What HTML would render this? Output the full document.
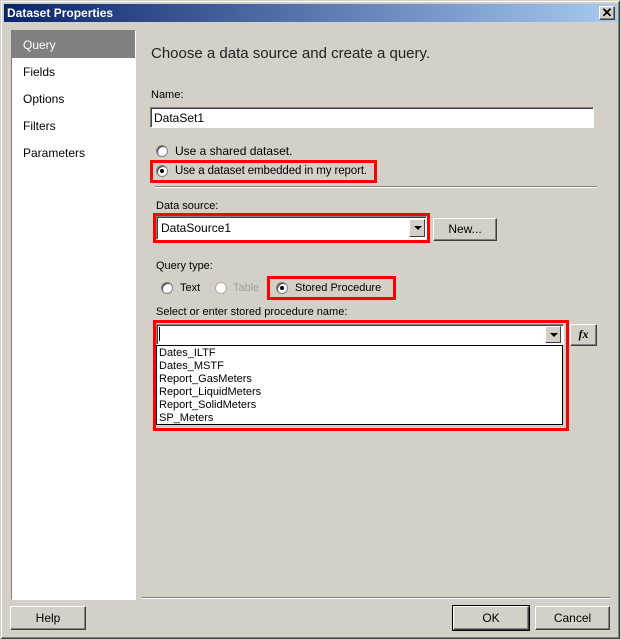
<!DOCTYPE html>
<html><head><style>
*{margin:0;padding:0;box-sizing:border-box}
body{width:621px;height:640px;background:#d4d0c8;font-family:"Liberation Sans",Tahoma,sans-serif;font-size:11px;color:#000;position:relative;overflow:hidden}
.a{position:absolute}
.win{left:0;top:0;width:621px;height:640px;border:1px solid #d4d0c8;box-shadow:inset -1px -1px 0 #404040,inset 1px 1px 0 #fff,inset -2px -2px 0 #808080}
.title{left:4px;top:4px;width:613px;height:18px;background:linear-gradient(90deg,#0a246a,#a6caf0);color:#fff;font-weight:bold;font-size:12px;line-height:18px;padding-left:3px}
.btn{background:#d4d0c8;border:1px solid;border-color:#fff #404040 #404040 #fff;box-shadow:inset -1px -1px 0 #808080;text-align:center}
.inset{background:#fff;border:1px solid;border-color:#808080 #fff #fff #808080;box-shadow:inset 1px 1px 0 #404040}
.red{border:3px solid #f00}
.radio{width:12px;height:12px;border-radius:50%;background:#fff;border:1px solid #808080;box-shadow:inset 1px 1px 0 #404040}
.dot{position:absolute;left:3px;top:3px;width:4px;height:4px;border-radius:50%;background:#000}
.arrow{width:16px;background:#d4d0c8;border:1px solid;border-color:#fff #404040 #404040 #fff}
.arrow:after{content:"";position:absolute;left:4px;top:6px;border:4px solid transparent;border-top:4px solid #000;border-bottom:0}
.nav{left:23px;font-size:12px}
</style></head><body>
<div class="a win"></div>
<div class="a title">Dataset Properties</div>
<div class="a btn" style="left:599px;top:6px;width:16px;height:14px;font-size:13px;line-height:11px;font-weight:bold">✕</div>

<div class="a" style="left:11px;top:30px;width:125px;height:570px;background:#fff;border:1px solid;border-color:#808080 #fff #fff #808080"></div>
<div class="a" style="left:12px;top:31px;width:123px;height:27px;background:#808080"></div>
<div class="a nav" style="top:38px;color:#fff">Query</div>
<div class="a nav" style="top:65px">Fields</div>
<div class="a nav" style="top:92px">Options</div>
<div class="a nav" style="top:119px">Filters</div>
<div class="a nav" style="top:146px">Parameters</div>

<div class="a" style="left:151px;top:45px;font-size:15px;color:#222">Choose a data source and create a query.</div>
<div class="a" style="left:151px;top:89px">Name:</div>
<div class="a inset" style="left:150px;top:107px;width:444px;height:21px;padding:3px 0 0 3px;font-size:12px">DataSet1</div>

<div class="a radio" style="left:156px;top:145px"></div>
<div class="a" style="left:175px;top:144px;font-size:12px">Use a shared dataset.</div>
<div class="a red" style="left:150px;top:160px;width:227px;height:23px"></div>
<div class="a radio" style="left:156px;top:165px"><div class="dot"></div></div>
<div class="a" style="left:175px;top:165px;font-size:11.5px;letter-spacing:-0.1px">Use a dataset embedded in my report.</div>
<div class="a" style="left:155px;top:186px;width:442px;height:2px;border-top:1px solid #808080;border-bottom:1px solid #fff"></div>

<div class="a" style="left:156px;top:200px">Data source:</div>
<div class="a red" style="left:153px;top:213px;width:277px;height:30px"></div>
<div class="a inset" style="left:156px;top:216px;width:271px;height:24px;padding:4px 0 0 4px;font-size:12px">DataSource1</div>
<div class="a arrow" style="left:409px;top:219px;height:18px"></div>
<div class="a btn" style="left:433px;top:218px;width:64px;height:23px;line-height:21px;font-size:12px">New...</div>

<div class="a" style="left:156px;top:260px">Query type:</div>
<div class="a radio" style="left:161px;top:282px"></div>
<div class="a" style="left:180px;top:282px;font-size:11px">Text</div>
<div class="a radio" style="left:215px;top:282px;border-color:#aaa;box-shadow:none"></div>
<div class="a" style="left:233px;top:282px;color:#a0a0a0">Table</div>
<div class="a red" style="left:267px;top:276px;width:129px;height:24px"></div>
<div class="a radio" style="left:276px;top:282px"><div class="dot"></div></div>
<div class="a" style="left:295px;top:282px">Stored Procedure</div>

<div class="a" style="left:156px;top:306px">Select or enter stored procedure name:</div>
<div class="a red" style="left:153px;top:320px;width:416px;height:111px"></div>
<div class="a inset" style="left:156px;top:324px;width:408px;height:21px"></div>
<div class="a" style="left:159px;top:327px;width:1px;height:14px;background:#000"></div>
<div class="a arrow" style="left:545px;top:326px;height:17px"></div>
<div class="a" style="left:156px;top:345px;width:407px;height:80px;background:#fff;border:1px solid #000;padding:1px 0 0 2px;line-height:13px;font-size:11px">Dates_ILTF<br>Dates_MSTF<br>Report_GasMeters<br>Report_LiquidMeters<br>Report_SolidMeters<br>SP_Meters</div>
<div class="a btn" style="left:570px;top:324px;width:27px;height:22px;font-family:'Liberation Serif',serif;font-style:italic;font-weight:bold;font-size:12px;line-height:19px">fx</div>

<div class="a" style="left:142px;top:597px;width:468px;height:2px;border-top:1px solid #808080;border-bottom:1px solid #fff"></div>
<div class="a btn" style="left:10px;top:606px;width:76px;height:24px;line-height:22px;font-size:12px">Help</div>
<div class="a btn" style="left:453px;top:606px;width:76px;height:24px;line-height:22px;font-size:12px;outline:1px solid #000">OK</div>
<div class="a btn" style="left:535px;top:606px;width:75px;height:24px;line-height:22px;font-size:12px">Cancel</div>
</body></html>
